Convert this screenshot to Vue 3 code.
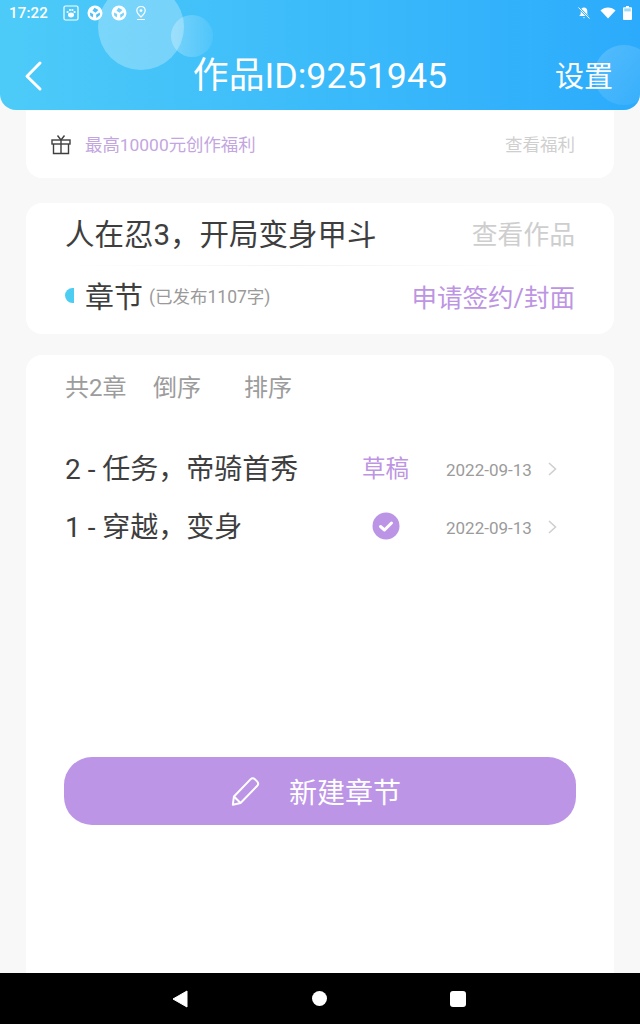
<script setup>
const chapters = [
  { id: 2, title: '2 - 任务\uFF0C帝骑首秀', date: '2022-09-13', draft: true },
  { id: 1, title: '1 - 穿越\uFF0C变身', date: '2022-09-13', draft: false }
]
</script>

<template>
  <div class="page">
    <header class="header">
      <span class="bubble bubble-a"></span>
      <span class="bubble bubble-b"></span>
      <span class="bubble bubble-c"></span>
      <div class="status">
        <div class="status-left">
          <span class="time">17:22</span>
          <svg class="st" width="16" height="16" viewBox="0 0 16 16"><rect x="1" y="1" width="14" height="14" rx="1.5" fill="none" stroke="#fff" stroke-width="1.2"/><ellipse cx="8" cy="10" rx="3" ry="2.4" fill="#fff"/><circle cx="4.6" cy="7" r="1.1" fill="#fff"/><circle cx="7" cy="5" r="1.1" fill="#fff"/><circle cx="9.4" cy="5" r="1.1" fill="#fff"/><circle cx="11.6" cy="7" r="1.1" fill="#fff"/></svg>
          <svg class="st" width="16" height="16" viewBox="0 0 16 16"><circle cx="8" cy="8" r="7.500" fill="#fff"/><path d="M7.500 2.800 11.500 5 8.500 7.800 5.500 5.800ZM3 7.500 6.200 9 5.800 12.500 3.200 10.500ZM12.800 7.500 13 10 9.500 13 9 9.800Z" fill="#4cc0f5"/></svg>
          <svg class="st st3" width="16" height="16" viewBox="0 0 16 16"><circle cx="8" cy="8" r="7.500" fill="#fff"/><path d="M7.500 2.800 11.500 5 8.500 7.800 5.500 5.800ZM3 7.500 6.200 9 5.800 12.500 3.200 10.500ZM12.800 7.500 13 10 9.500 13 9 9.800Z" fill="#7ad2fa"/></svg>
          <svg width="14" height="16" viewBox="0 0 14 16"><path d="M7 1.500C4.500 1.500 2.800 3.300 2.800 5.600 2.800 8.400 7 12 7 12s4.200-3.600 4.200-6.400C11.200 3.300 9.500 1.500 7 1.500Z" fill="none" stroke="#fff" stroke-width="1.200"/><circle cx="7" cy="5.600" r="1.400" fill="#fff"/><path d="M3 14.500h8" stroke="#fff" stroke-width="1.200"/></svg>
        </div>
        <div class="status-right">
          <svg width="14" height="14" viewBox="0 0 14 14"><path d="M7 1.500c-2 0-3.300 1.500-3.300 3.500v3L2.300 10h9.400L10.300 8V5C10.300 3 9 1.500 7 1.500ZM5.800 11.500a1.300 1.300 0 0 0 2.400 0Z" fill="#fff"/><path d="M1.500 1.500 12.500 12.500" stroke="#35b2fa" stroke-width="2.400"/><path d="M1.500 1.500 12.500 12.500" stroke="#fff" stroke-width="1"/></svg>
          <svg class="wifi" width="16" height="12" viewBox="0 0 16 12"><path d="M0.500 3.500C4.500-.5 11.500-.5 15.500 3.500L8 11.500Z" fill="#fff"/></svg>
          <svg class="batt" width="9" height="14" viewBox="0 0 9 14"><path d="M3 0h3v1.200h2a1 1 0 0 1 1 1V13a1 1 0 0 1-1 1H1a1 1 0 0 1-1-1V2.200a1 1 0 0 1 1-1h2Z" fill="#fff"/><rect x="1.200" y="2.400" width="6.600" height="3" fill="#9bdcfc"/></svg>
        </div>
      </div>
      <div class="navrow">
        <svg class="back" width="20" height="32" viewBox="0 0 20 32"><path d="M17 3 4 16.200 17 29" fill="none" stroke="#fff" stroke-width="3" stroke-linecap="round" stroke-linejoin="round"/></svg>
        <h1 class="title">作品ID:9251945</h1>
        <span class="settings">设置</span>
      </div>
    </header>

    <section class="card card-top">
      <svg class="gift" width="22" height="22" viewBox="0 0 22 22"><g fill="none" stroke="#3f3f3f" stroke-width="1.400"><rect x="2" y="7" width="18" height="4"/><path d="M3.500 11v9.500h15V11M11 7v13.500M11 7 7.500 2.500M11 7l3.500-4.500"/></g></svg>
      <span class="benefit">最高10000元创作福利</span>
      <span class="see-benefit">查看福利</span>
    </section>

    <section class="card card-work">
      <div class="work-row">
        <span class="work-name">人在忍3&#xFF0C;开局变身甲斗</span>
        <span class="see-work">查看作品</span>
      </div>
      <div class="divider"></div>
      <div class="chapter-row">
        <span class="half-dot"></span>
        <span class="chapter-label">章节</span>
        <span class="published">(已发布1107字)</span>
        <span class="apply">申请签约/封面</span>
      </div>
    </section>

    <section class="card card-list">
      <div class="tools">
        <span class="count">共2章</span>
        <span class="order">倒序</span>
        <span class="sort">排序</span>
      </div>
      <ul class="list">
        <li v-for="c in chapters" :key="c.id" class="item">
          <span class="item-title">{{ c.title }}</span>
          <span class="state">
            <span v-if="c.draft" class="draft">草稿</span>
            <svg v-else width="28" height="28" viewBox="0 0 28 28"><circle cx="14" cy="14" r="13.500" fill="#bc94e6"/><path d="M8.500 14.500 12.500 18 19.500 11" fill="none" stroke="#fff" stroke-width="3" stroke-linecap="round" stroke-linejoin="round"/></svg>
          </span>
          <span class="date">{{ c.date }}</span>
          <svg class="chev" width="10" height="16" viewBox="0 0 10 16"><path d="M2 2 8.500 8 2 14" fill="none" stroke="#cfcfcf" stroke-width="1.600"/></svg>
        </li>
      </ul>
      <button class="new-btn">
        <svg width="33" height="33" viewBox="0 0 30 30"><g fill="none" stroke="#fff" stroke-width="1.800" stroke-linejoin="round"><path d="M3.500 27 4.500 19.500 19.500 4a3 3 0 0 1 4.200 0l1.800 1.800a3 3 0 0 1 0 4.200L10.500 25.500Z"/><path d="M4.500 19.500 10.500 25.500"/></g></svg>
        <span>新建章节</span>
      </button>
    </section>

    <footer class="sysbar">
      <svg width="16" height="18" viewBox="0 0 16 18"><path d="M15 1V17L1 9Z" fill="#fff" stroke="#fff" stroke-linejoin="round"/></svg>
      <span class="home"></span>
      <span class="recent"></span>
    </footer>
  </div>
</template>

<style scoped>
.page {
  width: 640px;
  height: 1024px;
  background: #f8f8f8;
  display: flex;
  flex-direction: column;
  overflow: hidden;
  font-family: Roboto, "Noto Sans CJK SC", sans-serif;
}
.header {
  position: relative;
  flex: none;
  height: 110px;
  box-sizing: border-box;
  overflow: hidden;
  border-radius: 0 0 16px 16px;
  background: linear-gradient(90deg, #4dcbf8 0%, #3fbefa 40%, #2cabfc 100%);
  color: #fff;
}
.bubble { position: absolute; border-radius: 50%; }
.bubble-a { left: 98px; top: -16px; width: 86px; height: 86px; background: rgba(255,255,255,.28); }
.bubble-b { left: 171px; top: 15px; width: 42px; height: 42px; background: linear-gradient(90deg, rgba(255,255,255,.28), rgba(255,255,255,.08)); }
.bubble-c { left: 594px; top: 45px; width: 60px; height: 60px; background: linear-gradient(135deg, rgba(255,255,255,.18), rgba(255,255,255,.04)); }
.status {
  position: relative;
  height: 26px;
  padding: 0 8px 0 9px;
  display: flex;
  justify-content: space-between;
  align-items: center;
}
.status-left, .status-right { display: flex; align-items: center; }
.time { font-size: 15px; font-weight: 500; letter-spacing: .2px; width: 54px; }
.st { margin-right: 8px; }
.st3 { margin-right: 7px; }
.wifi { margin-left: 9px; }
.batt { margin-left: 7px; }
.navrow {
  position: relative;
  margin-top: 9px;
  height: 84px;
  padding: 0 25px;
  display: grid;
  grid-template-columns: 1fr auto 1fr;
  align-items: center;
}
.back { margin: -2px 0 0 -2px; }
.title {
  margin: 0;
  font-size: 35.800px;
  font-weight: 400;
  line-height: 1;
  white-space: nowrap;
}
.settings { justify-self: end; margin-right: 2px; font-size: 29px; line-height: 1; }
.card {
  background: #fff;
  margin: 0 26px;
  box-sizing: border-box;
  flex: none;
}
.card-top {
  height: 68px;
  border-radius: 0 0 16px 16px;
  display: flex;
  align-items: center;
  padding: 0 39px 2px 24px;
}
.gift { margin: 2px 13px 0 0; flex: none; }
.benefit { font-size: 17.400px; color: #c3a6e0; }
.see-benefit { margin-left: auto; font-size: 17.500px; color: #cfcfcf; }
.card-work {
  margin-top: 25px;
  height: 131px;
  border-radius: 16px;
  padding: 8px 39px 0 40px;
}
.work-row {
  height: 42px;
  display: flex;
  align-items: center;
  justify-content: space-between;
}
.work-name { font-size: 29.500px; color: #3e3e3e; margin-left: -1px; }
.see-work { font-size: 25.800px; color: #cecece; }
.divider {
  height: 1px;
  margin: 12px 8px 0 0;
  background: linear-gradient(90deg, #fff, #f3f3f3 45%, #fff);
}
.chapter-row {
  margin: 7px 0 0 -1px;
  height: 44px;
  display: flex;
  align-items: center;
}
.half-dot {
  width: 9px;
  height: 15px;
  border-radius: 8px 0 0 8px;
  background: #4dcdf2;
  margin-right: 11px;
}
.chapter-label { font-size: 29px; color: #3e3e3e; margin-right: 6px; }
.published { font-size: 17.500px; color: #9a9a9a; }
.apply { margin-left: auto; font-size: 25.500px; color: #bd95e3; }
.card-list {
  margin-top: 21px;
  flex: 1;
  border-radius: 16px 16px 0 0;
  padding: 13px 38px 0 38px;
  display: flex;
  flex-direction: column;
}
.tools {
  display: flex;
  align-items: center;
  height: 34px;
  margin-left: 1px;
  font-size: 24px;
  color: #9c9c9c;
}
.count { width: 88px; }
.order { width: 91px; }
.list {
  list-style: none;
  margin: 36px 0 0;
  padding: 0;
}
.item {
  height: 58px;
  display: flex;
  align-items: center;
  margin-left: 1px;
}
.item-title { width: 296px; font-size: 28px; color: #3e3e3e; white-space: nowrap; }
.state { width: 85px; display: flex; align-items: center; padding-left: 1px; box-sizing: border-box; }
.state svg { margin-left: 10px; margin-top: 1px; }
.draft { font-size: 23.500px; color: #bd95e3; }
.date { font-size: 17px; color: #9b9b9b; width: 100px; margin-top: 6px; }
.chev { margin: 4px 0 0 1px; }
.new-btn {
  margin-top: 203px;
  width: 512px;
  height: 68px;
  border: 0;
  border-radius: 28px;
  background: #bd95e7;
  color: #fff;
  display: flex;
  align-items: center;
  justify-content: center;
  gap: 27px;
  font: 400 28px Roboto, "Noto Sans CJK SC", sans-serif;
  padding: 0 10px 0 0;
}
.sysbar {
  flex: none;
  height: 51px;
  background: #000;
  position: relative;
  display: flex;
  align-items: center;
  padding-left: 172px;
}
.home { width: 15px; height: 15px; border-radius: 50%; background: #fff; margin-left: 124px; }
.recent { width: 16px; height: 16px; border-radius: 3px; background: #fff; margin-left: 123px; }
</style>
